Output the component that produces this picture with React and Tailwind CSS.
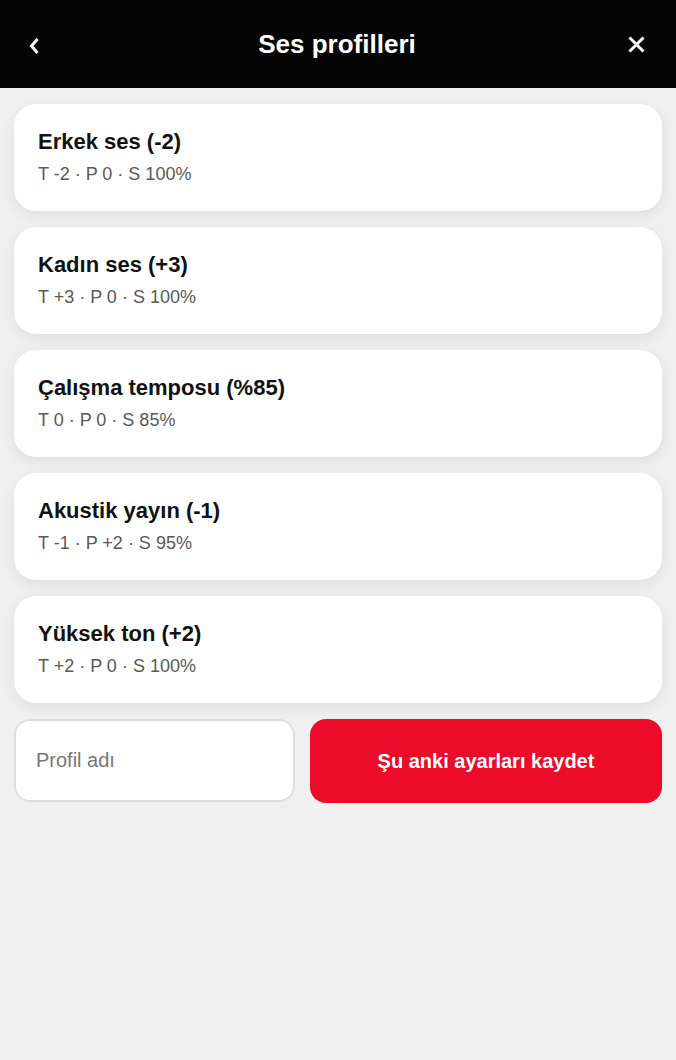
import React from "react";

const profiles = [
  { name: "Erkek ses (-2)", meta: "T -2 · P 0 · S 100%" },
  { name: "Kadın ses (+3)", meta: "T +3 · P 0 · S 100%" },
  { name: "Çalışma temposu (%85)", meta: "T 0 · P 0 · S 85%" },
  { name: "Akustik yayın (-1)", meta: "T -1 · P +2 · S 95%" },
  { name: "Yüksek ton (+2)", meta: "T +2 · P 0 · S 100%" },
];

export default function App() {
  return (
    <div
      className="min-h-[1060px] bg-[#f0f0f0]"
      style={{ fontFamily: '"Liberation Sans", Arial, sans-serif' }}
    >
      <header className="h-[88px] bg-[#050505] flex items-center pl-[29px] pr-[31px] text-white">
        <div className="w-[20px] flex justify-start">
          <svg width="11" height="18" viewBox="0 0 11 18" className="mt-[3px]">
            <path d="M8.5 2 L2.5 9 L8.5 16" stroke="white" strokeWidth="3" fill="none" strokeLinejoin="miter" />
          </svg>
        </div>
        <h1 className="flex-1 text-center text-[26px] font-bold">Ses profilleri</h1>
        <div className="w-[20px] flex justify-end">
          <svg width="17" height="17" viewBox="0 0 17 17">
            <path d="M1.5 1.5 L15.5 15.5 M15.5 1.5 L1.5 15.5" stroke="white" strokeWidth="3" />
          </svg>
        </div>
      </header>
      <main className="px-[14px] pt-4 flex flex-col gap-4">
        {profiles.map((p) => (
          <div
            key={p.name}
            className="bg-white rounded-[22px] px-6 pt-6 pb-[25px] shadow-[0_4px_14px_rgba(0,0,0,0.08)]"
          >
            <div className="text-[22px] font-bold leading-7 text-[#111]">{p.name}</div>
            <div className="text-[18px] leading-6 text-[#595959] mt-1.5">{p.meta}</div>
          </div>
        ))}
        <div className="flex gap-[15px]">
          <input
            placeholder="Profil adı"
            className="w-[281px] h-[83px] rounded-[16px] border-2 border-[#dedede] bg-white px-5 text-[20px] text-[#111] placeholder:text-[#777] outline-none"
            style={{ fontFamily: '"Liberation Sans", Arial, sans-serif' }}
          />
          <button className="flex-1 h-[84px] rounded-[16px] bg-[#ec0b28] text-white text-[20px] font-bold">
            Şu anki ayarları kaydet
          </button>
        </div>
      </main>
    </div>
  );
}
